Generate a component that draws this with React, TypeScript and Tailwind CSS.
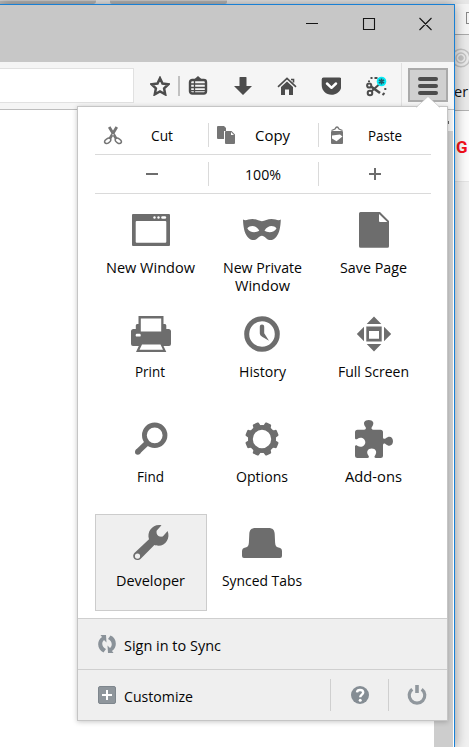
import type { ReactNode } from "react";

const fontStack = "font-['Open_Sans','Noto_Sans',sans-serif]";

function Icon({ children, className = "" }: { children: ReactNode; className?: string }) {
  return (
    <svg viewBox="0 0 20 20" className={`size-5 shrink-0 ${className}`} fill="#4c4c4c">
      {children}
    </svg>
  );
}

function Big({ children }: { children: ReactNode }) {
  return (
    <svg viewBox="0 0 40 40" className="size-10 shrink-0" fill="#6d6d6d">
      {children}
    </svg>
  );
}

const teeth = [22.5, 67.5, 112.5, 157.5, 202.5, 247.5, 292.5, 337.5];

const items: { label: string; width: number; icon: ReactNode; active?: boolean }[] = [
  {
    label: "New Window",
    width: 89,
    icon: (
      <>
        <path fillRule="evenodd" d="M2 4h36a1 1 0 0 1 1 1v30a1 1 0 0 1-1 1H2a1 1 0 0 1-1-1V5a1 1 0 0 1 1-1zM4.700 12q0-1 1-1h28.600q1 0 1 1v19.700q0 1-1 1H5.700q-1 0-1-1z" />
        <circle cx="23.500" cy="7.500" r="1.200" fill="#fff" />
        <circle cx="27.500" cy="7.500" r="1.200" fill="#fff" />
        <rect x="30.200" y="6.200" width="5" height="2.600" rx="1.300" fill="#fff" />
      </>
    ),
  },
  {
    label: "New Private Window",
    width: 80,
    icon: (
      <path
        fillRule="evenodd"
        d="M1 9.500C4 11.200 6 9 10.500 9c4 0 6.500 2.200 9.400 2.200S25.500 9 29.500 9c4.500 0 6.500 2.200 9.300.500-.2 6.500-1.200 13.500-4.600 17.500-2.400 2.800-4.700 3.200-6.700 3-3.300-.3-4.500-4.300-7.600-4.300S15.500 29.700 12.300 30c-2 .2-4.300-.2-6.700-3C2.200 23 1.200 16 1 9.500zM5.300 18.200c3-3.200 9-3.200 12 2.600-3.500 2.400-10.200 2-12-2.600zM34.500 18.200c-3-3.200-9-3.200-12 2.600 3.500 2.400 10.200 2 12-2.600z"
      />
    ),
  },
  {
    label: "Save Page",
    width: 67,
    icon: (
      <path fillRule="evenodd" d="M6.500 2H26l9 9v25.200q0 1.500-1.500 1.500h-27Q5 37.700 5 36.200V3.500Q5 2 6.500 2zM25 4v7q0 1 1 1h7.300z" />
    ),
  },
  {
    label: "Print",
    width: 30,
    icon: (
      <>
        <path d="M7.500 2h25v8h1.500q1.300 0 1.300 1.500V15h2.200Q40 15 40 17.500V30q0 2-2 2h-5.500l2.800 6H5l2.800-6H2q-2 0-2-2V17.500Q0 15 2.500 15h2.300v-3.500q0-1.500 1.300-1.500h1.400z" />
        <path fill="#fff" d="M9.800 4.500h20.400v13H9.800zM11 30.500h18.500l2.500 5.200H8.500z" />
        <rect x="4.700" y="19.800" width="5" height="2.800" rx="1.200" fill="#fff" />
      </>
    ),
  },
  {
    label: "History",
    width: 47,
    icon: (
      <>
        <circle cx="20" cy="20" r="15.300" fill="none" stroke="#6d6d6d" strokeWidth="5" />
        <path d="M17.800 12.500q0-2 2.200-2t2.200 2v6.800l4.800 7.400-6.900-3.900q-2.300-1.300-2.300-3.300z" />
      </>
    ),
  },
  {
    label: "Full Screen",
    width: 71,
    icon: (
      <path
        fillRule="evenodd"
        d="M20 2.500l7.300 7.500H12.700zM20 37.500l7.300-7.500H12.700zM2.800 20 10 12.700v14.600zM37.200 20 30 12.700v14.600zM12.300 12.500h15.400v15H12.300zM15 17v7.700h10V17z"
      />
    ),
  },
  {
    label: "Find",
    width: 27,
    icon: (
      <>
        <circle cx="23.700" cy="16.300" r="10.300" fill="none" stroke="#6d6d6d" strokeWidth="4.800" />
        <path d="m16.500 23.500-10 9.500" stroke="#6d6d6d" strokeWidth="5.600" />
        <circle cx="6.800" cy="33" r="2.800" />
      </>
    ),
  },
  {
    label: "Options",
    width: 52,
    icon: (
      <>
        <circle cx="20" cy="20" r="11.600" fill="none" stroke="#6d6d6d" strokeWidth="4.800" />
        {teeth.map((a) => (
          <path key={a} transform={`rotate(${a} 20 20)`} d="M15 8q1.600-1.200 1.600-3.500 0-1.400 1.400-1.400h4q1.400 0 1.400 1.400 0 2.300 1.600 3.500z" />
        ))}
      </>
    ),
  },
  {
    label: "Add-ons",
    width: 57,
    icon: (
      <>
        <path d="M3.500 10.800H10c1.700 0 2.200-1.300 1.700-2.600C8.300 4 10.500 1 14.700 1s6.400 3 3 7.200c-.5 1.300 0 2.600 1.700 2.600h7.100q2.500 0 2.500 2.500v4.900c0 1.500 1.300 2 2.500 1.300C35.500 16 39 18.200 39 22.200s-3.500 6.200-7.500 2.700c-1.200-.7-2.500-.2-2.500 1.300v10.300q0 2.500-2.500 2.500h-4.600c-1.400 0-1.900-1.200-1-2.300 2.800-3.700.7-7.200-3.200-7.200s-6 3.500-3.200 7.200c.9 1.100.4 2.300-1 2.300h-10Q1 39 1 36.500V27.700c0-1.400 1.200-1.900 2.300-1 3.600 2.500 8 .4 8-3.400s-4.400-5.900-8-3.400c-1.100.9-2.300.4-2.300-1v-5.600q0-2.500 2.500-2.500z" />
      </>
    ),
  },
  {
    label: "Developer",
    width: 69,
    active: true,
    icon: (
      <path
        fillRule="evenodd"
        d="M30.500 2.300 25.600 7.800c-.5 4.200 1.800 6.600 6.200 5.800l4.800-5.700c3 7-2 14.800-9 14.800-2 0-3.200-.3-4.200-.6L10 35.500C7 38.700 2.200 36.800 2.200 33c0-1.700.8-2.800 2-3.800L18 16.200C15.500 8.500 22 .5 30.500 2.300zM6.500 30.500a2.600 2.600 0 1 0 0 5.200 2.600 2.600 0 1 0 0-5.200z"
      />
    ),
  },
  {
    label: "Synced Tabs",
    width: 80,
    icon: (
      <path d="M13.500 5h13c4.200 0 6 2 6.200 6l.4 8.500c.2 3.200 1 4.700 3.400 5.100 2.500.4 3.500 1.500 3.500 4V33q0 2-2 2H2q-2 0-2-2v-4.400c0-2.500 1-3.600 3.500-4 2.400-.4 3.200-1.900 3.400-5.100L7.300 11c.2-4 2-6 6.200-6z" />
    ),
  },
];

// Condensed label: the text is fitted to the menu's label width.
function Label({ text, width, className = "" }: { text: string; width: number; className?: string }) {
  return (
    <svg height="20" width={width} className={`block shrink-0 overflow-visible ${className}`}>
      <text x="0" y="15" textLength={width} lengthAdjust="spacingAndGlyphs" fontSize="15" fill="#050505">
        {text}
      </text>
    </svg>
  );
}

function Divider({ className = "" }: { className?: string }) {
  return <div className={`w-px shrink-0 bg-[#dadada] ${className}`} />;
}

function Toolbar() {
  return (
    <div className="flex h-12 shrink-0 items-start border-b border-[#bdbdbd] bg-[#f5f5f5] pt-[6px]">
      <div className="h-[35px] w-[134px] shrink-0 border border-l-0 border-[#e1e1e1] bg-white" />
      <div className="flex h-[35px] items-center">
        <Icon className="ml-4">
          <path d="m10 2.200 2.500 5.300 5.900.7-4.300 4.200 1.100 5.900L10 15.400l-5.200 2.900 1.100-5.900L1.600 8.200l5.900-.7z" fill="none" stroke="#4c4c4c" strokeWidth="2.500" />
        </Icon>
        <div className="ml-2 h-5 w-[2px] bg-[#c1c1c1]" />
        <Icon className="ml-2">
          <path d="M5.500 4 10 0l4.500 4z" />
          <rect x="2" y="4" width="16" height="13.500" rx="2.200" fill="none" stroke="#4c4c4c" strokeWidth="2.400" />
          <path d="M6.500 4v14M3 8h14M3 11.500h14M3 14.700h14" stroke="#4c4c4c" strokeWidth="1.300" />
        </Icon>
        <Icon className="ml-[25px]">
          <path d="M6.500 1.500q0-.5.500-.5h6q.5 0 .5.500V10H19l-9 9-9-9h5.500z" />
        </Icon>
        <Icon className="ml-6">
          <path d="m1 10.800 9-8.500 9 8.500M14 3.500h2.500v3" fill="none" stroke="#4c4c4c" strokeWidth="1.600" />
          <path d="m10 5.500 6 5.500v8h-4v-5.500H8V19H4v-8z" />
        </Icon>
        <Icon className="ml-6">
          <path d="M2.500 1.500h16q2 0 2 2V9c0 5.800-4.500 9.700-10 9.700S.7 14.800.7 9V3.500q0-2 1.800-2z" />
          <path d="m6 7.500 4.500 4.300L15 7.500" fill="none" stroke="#fff" strokeWidth="2.500" strokeLinecap="round" strokeLinejoin="round" />
        </Icon>
        <Icon className="ml-[25px] overflow-visible">
          <path d="M3 6V4.500M4.500 2h2M8.500 2h3M19.300 12v2M18.500 17l-2 2" stroke="#4c4c4c" strokeWidth="2" fill="none" />
          <g fill="none" stroke="#4c4c4c" strokeWidth="2">
            <circle cx="3.200" cy="9.500" r="2.100" />
            <circle cx="4" cy="17" r="2.300" />
            <path d="m5 10.500 9 6.500" strokeWidth="2.600" />
            <path d="M5.500 15.200 13 8.500" />
          </g>
          <circle cx="15.500" cy="5.500" r="4.800" fill="#08eaf5" />
          <path d="M15.500 2.500v6m-2.600-4.500 5.200 3m0-3-5.200 3" stroke="#245c68" strokeWidth="1.600" />
        </Icon>
        <div className="ml-[15px] h-[46px] w-px bg-[#e0e0e0]" />
      </div>
      <div className="ml-[6px] flex h-[34px] w-10 shrink-0 flex-col items-center gap-[3px] border-2 border-[#aaaaaa] bg-[#d0d0d0] pt-[7px]">
        <div className="h-[4px] w-5 shrink-0 rounded-full bg-[#4c4c4c]" />
        <div className="h-[4px] w-5 shrink-0 rounded-full bg-[#4c4c4c]" />
        <div className="h-[4px] w-5 shrink-0 rounded-full bg-[#4c4c4c]" />
      </div>
    </div>
  );
}

function MenuPanel() {
  return (
    <div className="absolute left-[77px] top-[106px] flex h-[615px] w-[371px] flex-col border border-[#c5c5c5] bg-white shadow-[0_1px_5px_rgba(0,0,0,0.22)]">
      <svg viewBox="0 0 24 12" className="absolute -top-[11px] left-[338px] h-3 w-6">
        <path d="M0 12 12 .5 24 12z" fill="#fff" />
        <path d="M0 11.500 12 .5 24 11.500" fill="none" stroke="#c5c5c5" strokeWidth=".7" />
      </svg>
      <div className="mx-[17px] w-[336px]">
        <div className="flex h-12 items-start border-b border-[#dadada] pt-4">
          <div className="flex h-6 w-[113px] items-center">
            <svg viewBox="0 0 20 20" className="ml-2 size-5" fill="none" stroke="#757575">
              <path d="m6.200 2 7.200 12M13.800 2 6.600 14" strokeWidth="2.800" />
              <ellipse cx="4.700" cy="15.800" rx="3.400" ry="2.100" transform="rotate(-35 4.700 15.800)" strokeWidth="1.500" />
              <ellipse cx="15.300" cy="15.800" rx="3.400" ry="2.100" transform="rotate(35 15.300 15.800)" strokeWidth="1.500" />
              <circle cx="10" cy="9.700" r=".7" fill="#fff" stroke="none" />
            </svg>
            <Label text="Cut" width={22} className="ml-7 mt-[2px]" />
          </div>
          <Divider className="h-6" />
          <div className="flex h-6 w-[109px] items-center">
            <svg viewBox="0 0 20 20" className="ml-[7px] size-5" fill="#757575">
              <path d="M2 1h6l2 2v3H8v8H2q-1 0-1-1V2q0-1 1-1z" />
              <path fillRule="evenodd" d="M10 6h5.500L19 9.500V18q0 1-1 1h-8q-1 0-1-1V7q0-1 1-1zM15 7v3h3zM6.500 2v2.500H9z" />
            </svg>
            <Label text="Copy" width={35} className="ml-[19px] mt-[2px]" />
          </div>
          <Divider className="h-6" />
          <div className="flex h-6 items-center">
            <svg viewBox="0 0 20 20" className="ml-2 size-5" fill="#757575">
              <path fillRule="evenodd" d="M5 6h10q1 0 1 1v11q0 1-1 1H5q-1 0-1-1V7q0-1 1-1zM5 10.500v3l4.500 2.700 6-4.700L13 9.500z" />
              <path d="M4.500 5.500 8 4q2-4 4 0l3.500 1.500" fill="none" stroke="#757575" strokeWidth="1.300" />
            </svg>
            <Label text="Paste" width={34} className="ml-[21px] mt-[2px]" />
          </div>
        </div>
        <div className="flex h-[39px] items-center border-b border-[#dadada] text-[#6d6d6d]">
          <div className="flex w-[113px] justify-center">
            <div className="h-[2px] w-3 bg-[#6d6d6d]" />
          </div>
          <Divider className="h-6" />
          <div className="flex w-[109px] justify-center">
            <Label text="100%" width={36} className="mr-px mt-px" />
          </div>
          <Divider className="h-6" />
          <div className="flex w-[112px] justify-center">
            <svg viewBox="0 0 12 12" className="size-3" stroke="#6d6d6d" strokeWidth="2">
              <path d="M6 0v12M0 6h12" />
            </svg>
          </div>
        </div>
        <div className="grid h-[424px] grid-cols-[112px_110px_114px] grid-rows-[104px_105px_104px_97px] pt-[7px]">
          {items.map((item, i) => (
            <div
              key={item.label}
              className={`flex h-[97px] flex-col items-center border pt-2 ${item.active ? "border-[#cccccc] bg-[#efefef]" : "border-transparent"}`}
            >
              <Big>{item.icon}</Big>
              {item.label === "New Private Window" ? (
                <div className="mt-2 flex flex-col items-center">
                  <Label text="New Private" width={79} />
                  <Label text="Window" width={55} className="-mt-[2px]" />
                </div>
              ) : (
                <Label text={item.label} width={item.width} className={i % 3 === 1 ? "mt-2" : "mr-[1.500px] mt-2"} />
              )}
            </div>
          ))}
        </div>
      </div>
      <div className="flex h-[51px] items-center border-t border-[#cfcfcf] bg-[#efefef] pl-[19px]">
        <svg viewBox="0 0 20 20" className="size-5" fill="#8a9299">
          <path d="M9 1H3.500L5 3C-.8 7 .2 16 6.500 18.500L9 15C5 13 4 9 7 6l2.500 2.500zM11 19h5.500L15 17c5.800-4 4.800-13-1.500-15.500L11 5c4 2 5 6 2 9l-2.500-2.500z" />
        </svg>
        <Label text="Sign in to Sync" width={97} className="ml-[7px] mt-[3px]" />
      </div>
      <div className="flex h-[51px] items-center border-t border-[#cfcfcf] bg-[#efefef] pl-[20px]">
        <div className="flex size-[18px] items-center justify-center rounded-[2px] border border-[#7e868d] bg-[#8f969c]">
          <svg viewBox="0 0 10 10" className="size-[10px]" stroke="#fff" strokeWidth="2">
            <path d="M5 0v10M0 5h10" />
          </svg>
        </div>
        <Label text="Customize" width={69} className="ml-2 mt-[3px]" />
        <div className="ml-[137px] h-8 w-px bg-[#cfcfcf]" />
        <svg viewBox="0 0 20 20" className="ml-[19px] size-5">
          <circle cx="10" cy="10" r="9" fill="#858d94" />
          <path d="M7 7.300c.3-3.200 6.200-3 6.200.2 0 2-3 2.200-3 4.700" fill="none" stroke="#fff" strokeWidth="2.400" />
          <circle cx="10.200" cy="15.300" r="1.500" fill="#fff" />
        </svg>
        <div className="ml-[18px] h-8 w-px bg-[#cfcfcf]" />
        <svg viewBox="0 0 20 20" className="ml-[18px] size-5" fill="none" stroke="#90979d">
          <path d="M5.300 4.200a7.800 7.800 0 1 0 9.400 0" strokeWidth="3.200" />
          <path d="M10 0v8" strokeWidth="3.600" />
        </svg>
      </div>
    </div>
  );
}

export default function App() {
  return (
    <div className={`relative flex h-[747px] w-[469px] flex-col overflow-hidden bg-[#f1f1f1] ${fontStack}`}>
      <div className="flex h-1 shrink-0 gap-[14px] bg-[#e7e7e7]">
        <div className="w-[96px] rounded-br-[3px] border-t border-[#d0d0d0] bg-[#b8b8b8]" />
        <div className="w-[117px] rounded-b-[2px] border-t border-[#d0d0d0] bg-[#b8b8b8]" />
      </div>
      <div className="flex min-h-0 flex-1">
        <div className="z-10 flex w-[455px] shrink-0 flex-col border-r border-t border-[#1880d5] bg-white shadow-[0_0_12px_rgba(0,0,0,0.4)]">
          <div className="flex h-[57px] shrink-0 justify-end bg-[#c7c7c7] pr-[21px] pt-[12px]">
            <svg viewBox="0 0 128 14" className="h-[14px] w-32" fill="none" stroke="#151515">
              <path d="M1 6.500h12M58.500 1.500h11v11h-11zM114.500 1l12 12m0-12-12 12" strokeWidth="1.100" />
            </svg>
          </div>
          <Toolbar />
          <div className="flex flex-1 justify-end pr-px">
            <div className="w-[19px] bg-[#f0f0f0] pt-[21px]">
              <div className="h-full bg-[#cdcdcd]" />
            </div>
          </div>
        </div>
        <div className="flex w-[14px] flex-col">
          <div className="h-[31px] border-b border-[#a9a9a9] bg-[#f5f5f5] pt-2">
            <div className="ml-[11px] h-3 w-3 border border-[#888888]" />
          </div>
          <div className="h-[76px] overflow-hidden border-b border-[#b3b3b3] bg-[#eaeaea] pt-[13px]">
            <svg viewBox="0 0 20 20" className="-ml-[4px] size-5 max-w-none" fill="none" stroke="#c3c3c3">
              <circle cx="10" cy="10" r="8.800" strokeWidth="1.500" />
              <circle cx="10" cy="10" r="5" strokeWidth="1.300" />
              <circle cx="10" cy="10" r="2.300" fill="#c3c3c3" />
            </svg>
            <div className="-ml-px mt-[14px] text-[14.500px] leading-5 text-[#111111]">er</div>
          </div>
          <div className="h-[71px] border-b border-[#e5e5e5] bg-[#fcfcfc] pl-px pt-[26px] font-['Roboto',sans-serif] text-[17px] font-bold leading-5 text-[#f5101b]">
            G
          </div>
        </div>
      </div>
      <div className="absolute left-[447px] top-[121px] z-20 h-[3px] w-[2px] bg-[#606060]" />
      <div className="absolute inset-0 z-20">
        <MenuPanel />
      </div>
    </div>
  );
}
